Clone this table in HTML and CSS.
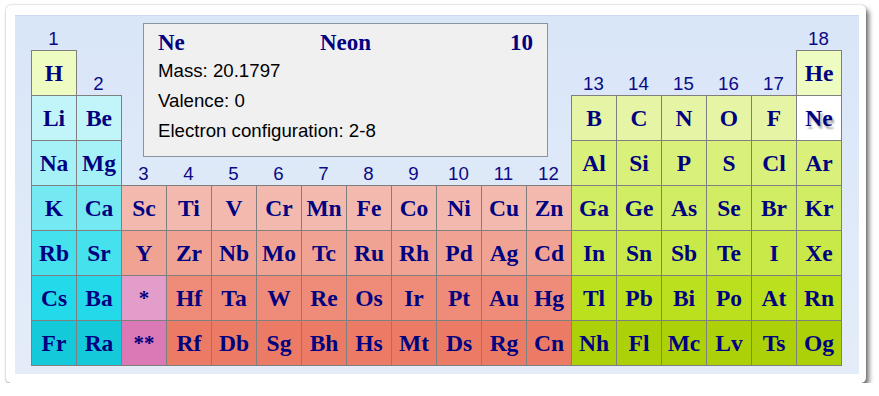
FILE: index.html
```html
<!DOCTYPE html>
<html>
  <head>
    <title>Periodic table</title>
    <link rel="stylesheet" href="styles.css">
  </head>
  <body>
    <article class="card">
      <section class="panel">
        <div class="table">

          <div class="info">
            <div class="info-head">
              <span>Ne</span>
              <span class="info-name">Neon</span>
              <span class="info-num">10</span>
            </div>
            <p>Mass: 20.1797</p>
            <p>Valence: 0</p>
            <p>Electron configuration: 2-8</p>
          </div>

          <div class="row head">
            <span class="grp">1</span>
            <span class="blank"></span>
            <span class="blank"></span><span class="blank"></span><span class="blank"></span><span class="blank"></span><span class="blank"></span>
            <span class="grp">18</span>
          </div>

          <div class="row per1">
            <div class="el h">H</div>
            <span class="grp">2</span>
            <span class="grp">13</span>
            <span class="grp">14</span>
            <span class="grp">15</span>
            <span class="grp">16</span>
            <span class="grp">17</span>
            <div class="el p">He</div>
          </div>

          <div class="row per2">
            <div class="el s">Li</div>
            <div class="el s">Be</div>
            <div class="el p">B</div>
            <div class="el p">C</div>
            <div class="el p">N</div>
            <div class="el p">O</div>
            <div class="el p">F</div>
            <div class="el sel">Ne</div>
          </div>

          <div class="row per3">
            <div class="el s">Na</div>
            <div class="el s">Mg</div>
            <span class="grp">3</span>
            <span class="grp">4</span>
            <span class="grp">5</span>
            <span class="grp">6</span>
            <span class="grp">7</span>
            <span class="grp">8</span>
            <span class="grp">9</span>
            <span class="grp">10</span>
            <span class="grp">11</span>
            <span class="grp">12</span>
            <div class="el p">Al</div>
            <div class="el p">Si</div>
            <div class="el p">P</div>
            <div class="el p">S</div>
            <div class="el p">Cl</div>
            <div class="el p">Ar</div>
          </div>

          <div class="row per4">
            <div class="el s">K</div>
            <div class="el s">Ca</div>
            <div class="el d">Sc</div>
            <div class="el d">Ti</div>
            <div class="el d">V</div>
            <div class="el d">Cr</div>
            <div class="el d">Mn</div>
            <div class="el d">Fe</div>
            <div class="el d">Co</div>
            <div class="el d">Ni</div>
            <div class="el d">Cu</div>
            <div class="el d">Zn</div>
            <div class="el p">Ga</div>
            <div class="el p">Ge</div>
            <div class="el p">As</div>
            <div class="el p">Se</div>
            <div class="el p">Br</div>
            <div class="el p">Kr</div>
          </div>

          <div class="row per5">
            <div class="el s">Rb</div>
            <div class="el s">Sr</div>
            <div class="el d">Y</div>
            <div class="el d">Zr</div>
            <div class="el d">Nb</div>
            <div class="el d">Mo</div>
            <div class="el d">Tc</div>
            <div class="el d">Ru</div>
            <div class="el d">Rh</div>
            <div class="el d">Pd</div>
            <div class="el d">Ag</div>
            <div class="el d">Cd</div>
            <div class="el p">In</div>
            <div class="el p">Sn</div>
            <div class="el p">Sb</div>
            <div class="el p">Te</div>
            <div class="el p">I</div>
            <div class="el p">Xe</div>
          </div>

          <div class="row per6">
            <div class="el s">Cs</div>
            <div class="el s">Ba</div>
            <div class="el f">*</div>
            <div class="el d">Hf</div>
            <div class="el d">Ta</div>
            <div class="el d">W</div>
            <div class="el d">Re</div>
            <div class="el d">Os</div>
            <div class="el d">Ir</div>
            <div class="el d">Pt</div>
            <div class="el d">Au</div>
            <div class="el d">Hg</div>
            <div class="el p">Tl</div>
            <div class="el p">Pb</div>
            <div class="el p">Bi</div>
            <div class="el p">Po</div>
            <div class="el p">At</div>
            <div class="el p">Rn</div>
          </div>

          <div class="row per7">
            <div class="el s">Fr</div>
            <div class="el s">Ra</div>
            <div class="el f">**</div>
            <div class="el d">Rf</div>
            <div class="el d">Db</div>
            <div class="el d">Sg</div>
            <div class="el d">Bh</div>
            <div class="el d">Hs</div>
            <div class="el d">Mt</div>
            <div class="el d">Ds</div>
            <div class="el d">Rg</div>
            <div class="el d">Cn</div>
            <div class="el p">Nh</div>
            <div class="el p">Fl</div>
            <div class="el p">Mc</div>
            <div class="el p">Lv</div>
            <div class="el p">Ts</div>
            <div class="el p">Og</div>
          </div>

        </div>
      </section>
    </article>
  </body>
</html>
```

FILE: styles.css
```css
* {
  box-sizing: border-box;
}

body, html {
  margin: 0;
  padding: 0;
  background-color: #fff;
}

.card {
  width: 860px;
  margin: 5px 0 0 6px;
  padding: 10px 7px 9px 9px;
  background-color: #fff;
  border-radius: 5px;
  box-shadow: 0 0 2px rgba(0, 0, 0, 0.3), 3px 4px 5px rgba(0, 0, 0, 0.55);
}

.panel {
  padding: 0 16px 8px 16px;
  background: linear-gradient(#d9e6f8, #e4ecf8);
  border-top: 1px solid #cbdaf0;
}

.table {
  display: grid;
  grid-template-columns: repeat(18, 45px);
  grid-template-rows: 34px repeat(7, 45px);
  padding-bottom: 1px;
}

.row {
  display: contents;
}

.grp {
  align-self: end;
  margin-bottom: 1px;
  text-align: center;
  font-family: 'Liberation Sans', Arial, sans-serif;
  font-size: 18.67px;
  line-height: 1;
  color: #0a0a86;
}

.el {
  width: 46px;
  height: 46px;
  border: 1px solid #7f7f7f;
  text-align: center;
  font-family: 'Liberation Serif', 'Times New Roman', serif;
  font-weight: bold;
  font-size: 23.5px;
  line-height: 44px;
  color: #000080;
}

.el.f {
  font-size: 21px;
}

.el.sel {
  background-color: #fff;
  text-shadow: 2px 3px 2px #a8a8a8;
}

.per1 .h,
.per1 .p { background-color: #eefbc1; }

.per2 .s { background-color: #c2f5f9; }
.per2 .p { background-color: #e5f5a5; }

.per3 .s { background-color: #a6f1f8; }
.per3 .p { background-color: #d9f17b; }

.per4 .s { background-color: #74e9f1; }
.per4 .d { background-color: #f3b9af; }
.per4 .p { background-color: #d1ed63; }

.per5 .s { background-color: #45e1ed; }
.per5 .d { background-color: #f1a393; }
.per5 .p { background-color: #c9e948; }

.per6 .s { background-color: #24d9e9; }
.per6 .d { background-color: #ee8b79; }
.per6 .f { background-color: #e39dca; }
.per6 .p { background-color: #bbe11e; }

.per7 .s { background-color: #14c9d9; }
.per7 .d { background-color: #ec7b66; }
.per7 .f { background-color: #da79b6; }
.per7 .p { background-color: #acd109; }

/* info box about the selected element */
.info {
  grid-area: 1 / 3 / 4 / 13;
  align-self: start;
  justify-self: start;
  width: 405px;
  height: 134px;
  margin: 7px 0 0 22px;
  padding: 6px 14px 0 14px;
  background-color: #f0f0f0;
  border: 1px solid #8a949e;
  font-family: 'Liberation Sans', Arial, sans-serif;
  font-size: 18.67px;
  color: #000;
}

.info-head {
  display: grid;
  grid-template-columns: 1fr auto 1fr;
  font-family: 'Liberation Serif', 'Times New Roman', serif;
  font-weight: bold;
  font-size: 23px;
  line-height: 26px;
  color: #000080;
}

.info-num {
  text-align: right;
}

.info p {
  margin: 0;
  line-height: 30px;
}
```
